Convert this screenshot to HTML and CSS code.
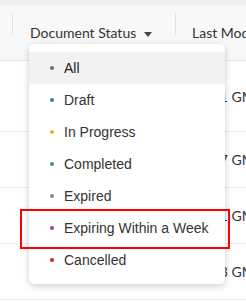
FILE: index.html
```html
<html>
<head>
	<title>documents</title>
	<link rel="stylesheet" href="styles.css">
</head>
<body>

<div class='topbar'></div>

<div class='grid'>
	<div class='row head'>
		<div class='cell first'></div>
		<div class='cell status'>Document Status <span class='caret'></span></div>
		<div class='cell modified'>Last Modified</div>
	</div>
	<div class='row tall'>
		<div class='cell first'></div>
		<div class='cell status'></div>
		<div class='cell modified'>10:21 GMT</div>
	</div>
	<div class='row'>
		<div class='cell first'></div>
		<div class='cell status'></div>
		<div class='cell modified'>10:27 GMT</div>
	</div>
	<div class='row'>
		<div class='cell first'></div>
		<div class='cell status'></div>
		<div class='cell modified'>10:21 GMT</div>
	</div>
	<div class='row'>
		<div class='cell first'></div>
		<div class='cell status'></div>
		<div class='cell modified'>10:23 GMT</div>
	</div>
</div>

<div class='menu'>
	<div class='item on'><span class='dot all'></span>All</div>
	<div class='item'><span class='dot draft'></span>Draft</div>
	<div class='item'><span class='dot progress'></span>In Progress</div>
	<div class='item'><span class='dot done'></span>Completed</div>
	<div class='item'><span class='dot expired'></span>Expired</div>
	<div class='item'><span class='dot week'></span>Expiring Within a Week</div>
	<div class='item'><span class='dot cancel'></span>Cancelled</div>
	<div class='mark'></div>
</div>

</body>
</html>
```

FILE: styles.css
```css
body{
	margin:0;
	width:246px;
	height:302px;
	overflow:hidden;
	background-color:#fff;
	font-family:Lato, "Liberation Sans", sans-serif;
	color:#333;
	position:relative;
}
.topbar{
	height:5px;
	background-color:#eef0f3;
}
.grid{
	width:246px;
	overflow:hidden;
}
.row{
	display:flex;
	height:55px;
	border-bottom:1px solid #ececec;
	align-items:center;
}
.row.head{
	height:55px;
	background-color:#f8f8f8;
	border-bottom:1px solid #e6e6e6;
}
.row.tall{
	height:70px;
}
.cell{
	font-size:14px;
	white-space:nowrap;
	position:relative;
	flex-shrink:0;
}
.first{
	width:12px;
}
.status{
	width:163px;
	padding-left:18px;
	box-sizing:border-box;
}
.modified{
	padding-left:17px;
}
.head .status:before,
.head .modified:before{
	content:"";
	position:absolute;
	left:0;
	top:-11px;
	height:22px;
	border-left:1px solid #e2e2e2;
}
.caret{
	display:inline-block;
	width:0;
	height:0;
	border-left:4px solid transparent;
	border-right:4px solid transparent;
	border-top:5px solid #444;
	margin-left:4px;
	vertical-align:middle;
}
.menu{
	position:absolute;
	left:29px;
	top:44px;
	width:196px;
	padding:8px 0;
	background-color:#fff;
	border-radius:5px;
	box-shadow:0 2px 7px rgba(0,0,0,0.2);
	font-family:"Liberation Sans", Arial, sans-serif;
}
.item{
	height:32px;
	display:flex;
	align-items:center;
	padding-left:21px;
	font-size:14px;
	color:#333;
}
.item.on{
	background-color:#f2f2f2;
	color:#222;
}
.dot{
	width:4px;
	height:4px;
	border-radius:50%;
	margin-right:10px;
}
.all{ background-color:#6e6e6e; }
.draft{ background-color:#1a7fd4; }
.progress{ background-color:#f5a623; }
.done{ background-color:#2e9e5b; }
.expired{ background-color:#868b9a; }
.week{ background-color:#8e44ad; }
.cancel{ background-color:#e0201b; }
.mark{
	position:absolute;
	left:-9px;
	top:165px;
	width:206px;
	height:36px;
	border:2px solid #f00;
}
```
